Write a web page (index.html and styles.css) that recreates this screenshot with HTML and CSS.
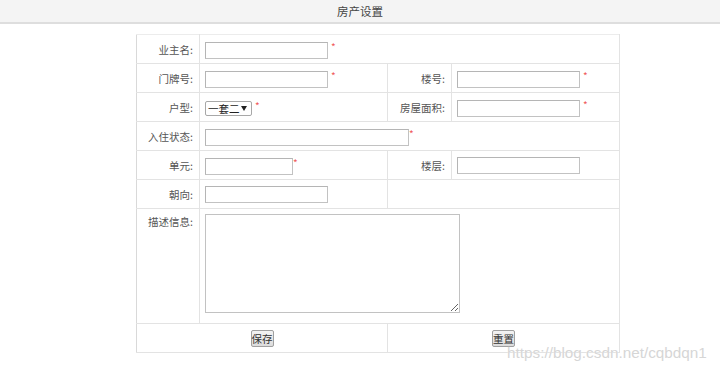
FILE: index.html
```html
<!DOCTYPE html>
<html lang="zh">
<head>
<meta charset="utf-8">
<title>房产设置</title>
<link rel="stylesheet" href="styles.css">
</head>
<body>
<div class="header">房产设置</div>
<form class="form">
<table class="grid">
<colgroup>
<col class="c1"><col class="c2"><col class="c3"><col class="c4">
</colgroup>
<tr>
<td class="lbl">业主名:</td>
<td colspan="3"><input class="ipt w123" type="text"><span class="req">*</span></td>
</tr>
<tr>
<td class="lbl">门牌号:</td>
<td><input class="ipt w123" type="text"><span class="req">*</span></td>
<td class="lbl">楼号:</td>
<td><input class="ipt w123" type="text"><span class="req">*</span></td>
</tr>
<tr>
<td class="lbl">户型:</td>
<td><span class="sel"><select class="select"><option>一套二</option></select></span><span class="req">*</span></td>
<td class="lbl">房屋面积:</td>
<td><input class="ipt w123" type="text"><span class="req">*</span></td>
</tr>
<tr>
<td class="lbl">入住状态:</td>
<td colspan="3"><input class="ipt w204" type="text"><span class="req tight">*</span></td>
</tr>
<tr>
<td class="lbl">单元:</td>
<td><input class="ipt w88" type="text"><span class="req tight">*</span></td>
<td class="lbl">楼层:</td>
<td><input class="ipt w123" type="text"></td>
</tr>
<tr>
<td class="lbl">朝向:</td>
<td><input class="ipt w123" type="text"></td>
<td colspan="2"></td>
</tr>
<tr class="tall">
<td class="lbl top">描述信息:</td>
<td colspan="3" class="top"><textarea class="area"></textarea></td>
</tr>
<tr>
<td colspan="2" class="ctr"><button type="button" class="btn">保存</button></td>
<td colspan="2" class="ctr"><button type="button" class="btn">重置</button></td>
</tr>
</table>
</form>
<div class="mark">https://blog.csdn.net/cqbdqn1</div>
</body>
</html>
```
FILE: styles.css
```css
html, body {
  margin: 0;
  padding: 0;
  background: #fff;
  font-family: "Noto Sans CJK SC", "Noto Sans", sans-serif;
  font-size: 10.5px;
  color: #555;
}
body { position: relative; width: 720px; height: 371px; overflow: hidden; }
.header {
  height: 22px;
  line-height: 22px;
  background: #f4f4f4;
  border-bottom: 2px solid #dedede;
  text-align: center;
  color: #444;
  font-size: 11.5px;
}
.form { margin: 10px 0 0 136px; }
.grid {
  border-collapse: collapse;
  table-layout: fixed;
  width: 483px;
}
.c1 { width: 63px; }
.c2 { width: 188px; }
.c3 { width: 64px; }
.c4 { width: 168px; }
.grid td {
  border: 1px solid #e3e3e3;
  height: 29px;
  padding: 0 0 0 5px;
  box-sizing: border-box;
  white-space: nowrap;
  vertical-align: middle;
}
.grid tr:first-child td { border-top-color: #ececec; }
.grid td:first-child { border-left: 1px solid #d9d9d9; }
.grid td.lbl {
  text-align: right;
  padding: 0 6px 0 0;
  color: #555;
}
.grid tr.tall td { height: 115px; }
.grid td.top { vertical-align: top; padding-top: 5px; }
.grid td.lbl.top { padding-top: 5px; }
.grid td.ctr { text-align: center; padding: 0; }
.ipt {
  box-sizing: border-box;
  height: 17px;
  border: 1px solid #c2c2c2;
  border-top-color: #b5b5b5;
  border-left-color: #b5b5b5;
  padding: 0 2px;
  margin: 0;
  vertical-align: middle;
  font: inherit;
  background: #fff;
}
.w123 { width: 123px; }
.w204 { width: 204px; }
.w88 { width: 88px; }
.req {
  color: #f05a5a;
  font-size: 10px;
  margin-left: 3px;
  vertical-align: 2px;
}
.req.tight { margin-left: 0; }
.sel { position: relative; display: inline-block; vertical-align: middle; }
.sel::after {
  content: "";
  position: absolute;
  right: 5px;
  top: 5px;
  border-left: 3px solid transparent;
  border-right: 3px solid transparent;
  border-top: 5px solid #222;
}
.select {
  -webkit-appearance: none;
  appearance: none;
  box-sizing: border-box;
  width: 47px;
  height: 15px;
  border: 1px solid #a8a8a8;
  border-radius: 2px;
  background: #fff;
  padding: 0 0 0 2px;
  margin: 0;
  font: 10.5px "Noto Sans CJK SC", sans-serif;
  line-height: 13px;
  color: #222;
  display: block;
}
.area {
  box-sizing: border-box;
  width: 255px;
  height: 99px;
  border: 1px solid #c2c2c2;
  margin: 0;
  display: block;
  resize: both;
}
.btn {
  box-sizing: border-box;
  height: 17px;
  width: 23px;
  padding: 0;
  font: 10.5px "Noto Sans CJK SC", sans-serif;
  line-height: 15px;
  color: #333;
  border: 1px solid #a0a0a0;
  border-radius: 2px;
  background: linear-gradient(#f3f3f3, #dcdcdc);
  vertical-align: middle;
}
.mark {
  position: absolute;
  left: 507px;
  top: 344px;
  font-family: "Liberation Sans", Arial, sans-serif;
  font-size: 15.3px;
  color: #d6d6d6;
  text-shadow: 0 0 1px #fff;
}
```
